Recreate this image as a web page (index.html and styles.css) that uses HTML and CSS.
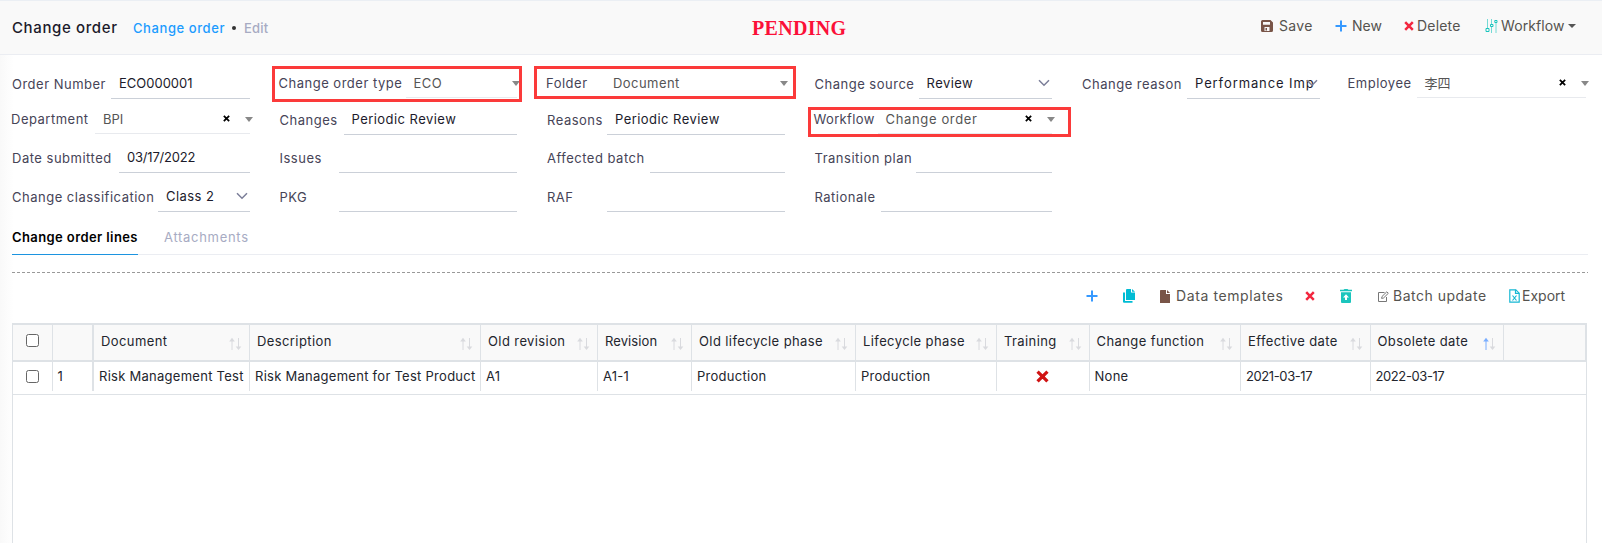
FILE: index.html
```html
<!DOCTYPE html>
<html lang="en">
<head>
<meta charset="utf-8">
<title>Change order</title>
<link rel="stylesheet" href="styles.css">
</head>
<body>
<svg width="0" height="0" class="defs">
  <symbol id="sort" viewBox="0 0 14 14"><path class="up" d="M4 13V3"/><path class="up head" d="M1.2 4.6 4 .8l2.8 3.8z"/><path class="down" d="M10.500 1v10"/><path class="down head" d="M7.700 9.600h5.600L10.500 13z"/></symbol>
  <symbol id="plus" viewBox="0 0 12 12"><path d="M6 .5v11M.5 6h11" stroke="#3699ff" stroke-width="2"/></symbol>
  <symbol id="cross" viewBox="0 0 10 10"><path d="M1.200 1.200l7.600 7.600M8.800 1.200L1.200 8.800" stroke="currentColor" stroke-width="2.500"/></symbol>
  <symbol id="chev" viewBox="0 0 12 8"><path d="M1 1.200l5 5 5-5" fill="none" stroke="#7b7e98" stroke-width="1.500"/></symbol>
</svg>

<header class="top">
  <h1>Change order</h1>
  <a class="crumb">Change order</a><i class="dot"></i><span class="crumb-last">Edit</span>
  <strong class="status">PENDING</strong>
  <nav class="actions">
    <span class="act save"><svg width="12" height="12" viewBox="0 0 12 12"><path fill="#795548" fill-rule="evenodd" d="M1.500 0h8L12 2.500v8A1.500 1.500 0 0 1 10.500 12h-9A1.500 1.500 0 0 1 0 10.500v-9A1.500 1.500 0 0 1 1.500 0zM2 2v2.800h7V2zM3.500 7v4h5V7z"/><path fill="#795548" d="M4.500 8h1.500v2.500H4.500z"/></svg><b>Save</b></span>
    <span class="act new"><svg width="12" height="12"><use href="#plus"/></svg><b>New</b></span>
    <span class="act delete"><svg width="10" height="10"><use href="#cross"/></svg><b>Delete</b></span>
    <span class="act flow"><svg width="13" height="14" viewBox="0 0 13 14" fill="none" stroke="#1bc5bd"><path d="M2.500 0v9M6.500 0v5M6.500 8v6M11 4v10" stroke-opacity=".6"/><path d="M1 9.500h3v3H1zM5.500 5.500h2.500v2H5.500zM9.800 1.500h2.200v2H9.800z"/></svg><b>Workflow</b><i class="caret"></i></span>
  </nav>
</header>

<main>
  <form class="form">
    <div class="row r1">
      <div class="field f-number"><label>Order Number</label><div class="input num">ECO000001</div></div>
      <div class="field soft f-type"><label>Change order type</label><div class="input">ECO<i class="arrow"></i></div><i class="mark"></i></div>
      <div class="field soft bare f-folder"><label>Folder</label><div class="input">Document<i class="arrow"></i></div><i class="mark"></i></div>
      <div class="field f-source"><label>Change source</label><div class="input">Review<svg class="chev" width="12" height="8"><use href="#chev"/></svg></div></div>
      <div class="field f-reason"><label>Change reason</label><div class="input">Performance Imp<svg class="chev" width="12" height="8"><use href="#chev"/></svg></div></div>
      <div class="field soft f-employee"><label>Employee</label><div class="input num">李四<svg class="clear" width="7" height="7"><use href="#cross"/></svg><i class="arrow"></i></div></div>
    </div>
    <div class="row r2">
      <div class="field soft f-dept"><label>Department</label><div class="input num">BPI<svg class="clear" width="7" height="7"><use href="#cross"/></svg><i class="arrow"></i></div></div>
      <div class="field f-changes"><label>Changes</label><div class="input">Periodic Review</div></div>
      <div class="field f-reasons"><label>Reasons</label><div class="input">Periodic Review</div></div>
      <div class="field soft f-workflow"><label>Workflow</label><div class="input">Change order<svg class="clear" width="7" height="7"><use href="#cross"/></svg><i class="arrow"></i></div><i class="mark"></i></div>
    </div>
    <div class="row r3">
      <div class="field f-date"><label>Date submitted</label><div class="input date">03/17/2022</div></div>
      <div class="field f-issues"><label>Issues</label><div class="input"></div></div>
      <div class="field f-batch"><label>Affected batch</label><div class="input"></div></div>
      <div class="field f-plan"><label>Transition plan</label><div class="input"></div></div>
    </div>
    <div class="row r4">
      <div class="field f-class"><label>Change classification</label><div class="input">Class 2<svg class="chev" width="12" height="8"><use href="#chev"/></svg></div></div>
      <div class="field f-issues"><label>PKG</label><div class="input"></div></div>
      <div class="field f-reasons"><label>RAF</label><div class="input"></div></div>
      <div class="field f-rationale"><label>Rationale</label><div class="input"></div></div>
    </div>
  </form>

  <div class="tabs"><span class="tab active">Change order lines</span><span class="tab">Attachments</span></div>
  <div class="dash"></div>

  <div class="tools">
    <span class="act t-add"><svg width="12" height="12"><use href="#plus"/></svg></span>
    <span class="act t-copy"><svg width="12" height="14" viewBox="0 0 12 14" fill="#00bcd4"><path d="M4 0h4v3.500h4V11H3V1q0-1 1-1z"/><path d="M9 0l3 2.700H9z"/><path d="M0 3.500h2V12h7.500v1.800H1q-1 0-1-1z"/></svg></span>
    <span class="act t-data"><svg width="10" height="13" viewBox="0 0 10 13" fill="#795548"><path d="M.7 0H6v4h4v9H0V.7Q0 0 .7 0z"/><path d="M7 0l3 3H7z"/></svg><b>Data templates</b></span>
    <span class="act t-del"><svg width="10" height="10"><use href="#cross"/></svg></span>
    <span class="act t-trash"><svg width="12" height="14" viewBox="0 0 12 14"><path fill="#1bc5bd" fill-rule="evenodd" d="M0 .8h3.500L4.500 0h3l1 .8H12v1.400H0zM1 3.200h10V13q0 1-1 1H2q-1 0-1-1zM6 5.200L3 8.500h2V11h2V8.500h2z"/></svg></span>
    <span class="act t-batch"><svg width="11" height="11" viewBox="0 0 11 11" fill="none" stroke="#777"><path d="M6.500 1.500h-6v9h8V6"/><path d="M4 5.500L8.800.8l1.500 1.500L5.500 7 3.600 7.400z"/></svg><b>Batch update</b></span>
    <span class="act t-export"><svg width="11" height="14" viewBox="0 0 11 14" fill="none" stroke="#17b8d4" stroke-width="1.200"><path d="M.8.8h6l3.400 3.400v9H.8z"/><path d="M6.500.8v3.600h3.700M3.500 6.500l4 5M7.500 6.500l-4 5"/></svg><b>Export</b></span>
  </div>

  <div class="grid">
    <div class="line head">
      <div class="cell check"><i class="box"></i></div><div class="cell"></div>
      <div class="cell"><b>Document</b><svg><use href="#sort"/></svg></div>
      <div class="cell"><b>Description</b><svg><use href="#sort"/></svg></div>
      <div class="cell"><b>Old revision</b><svg><use href="#sort"/></svg></div>
      <div class="cell"><b class="tight">Revision</b><svg><use href="#sort"/></svg></div>
      <div class="cell"><b>Old lifecycle phase</b><svg><use href="#sort"/></svg></div>
      <div class="cell"><b>Lifecycle phase</b><svg><use href="#sort"/></svg></div>
      <div class="cell"><b>Training</b><svg><use href="#sort"/></svg></div>
      <div class="cell"><b>Change function</b><svg><use href="#sort"/></svg></div>
      <div class="cell"><b>Effective date</b><svg><use href="#sort"/></svg></div>
      <div class="cell sorted"><b>Obsolete date</b><svg><use href="#sort"/></svg></div>
      <div class="cell"></div>
    </div>
    <div class="line data">
      <div class="cell check"><i class="box"></i></div><div class="cell">1</div>
      <div class="cell">Risk Management Test</div>
      <div class="cell">Risk Management for Test Product</div>
      <div class="cell">A1</div><div class="cell">A1-1</div>
      <div class="cell">Production</div><div class="cell">Production</div>
      <div class="cell no"><svg width="13" height="13"><use href="#cross"/></svg></div>
      <div class="cell">None</div><div class="cell date">2021-03-17</div><div class="cell date last-date">2022-03-17</div><div class="cell"></div>
    </div>
  </div>
</main>
</body>
</html>
```

FILE: styles.css
```css
* { box-sizing: border-box; }
body {
  margin: 0;
  height: 543px;
  overflow: hidden;
  display: flex;
  flex-direction: column;
  background: linear-gradient(90deg, #f9f9f9, #fff 14px);
  font: 13px/20px Inter, "Noto Sans CJK SC", sans-serif;
  color: #464457;
  white-space: nowrap;
}
b { font-weight: 400; }
svg { flex: none; }
.defs { position: absolute; }

.top {
  height: 55px;
  display: flex;
  align-items: center;
  padding-left: 12px;
  background: #f9f9f9;
  border-top: 1px solid #ebeff4;
  border-bottom: 1px solid #ebedf2;
}
h1 { margin: 0; width: 121px; font-size: 15px; font-weight: 500; letter-spacing: .62px; color: #1c1b2b; }
.crumb { width: 99px; color: #1c9cff; font-weight: 500; letter-spacing: .58px; }
.dot { width: 4px; height: 4px; border-radius: 50%; background: #333; }
.crumb-last { margin-left: 8px; width: 508px; color: #a7abc3; font-weight: 500; letter-spacing: .2px; }
.status { width: 509px; font: bold 20px/24px "Liberation Serif", serif; letter-spacing: .3px; color: #fb1038; }
.actions, .tools { display: flex; }
.actions { padding-bottom: 3px; }
.act { display: flex; align-items: center; flex: none; font-size: 14px; color: #55534f; }
.act.save { width: 74px; gap: 6px; letter-spacing: .3px; }
.act.new { width: 69px; gap: 5px; }
.act.delete { width: 81px; gap: 3px; letter-spacing: .2px; }
.act.delete svg, .t-del svg { color: #f3273f; }
.act.flow { gap: 3px; letter-spacing: .1px; }
.caret { border: 4px solid transparent; border-top-color: #555; border-bottom: 0; }

main { flex: 1; display: flex; flex-direction: column; padding: 11px 14px 0 12px; }
.form { height: 159px; }
.row { display: grid; grid-template-columns: repeat(5, 237.500px) 238.500px; column-gap: 30px; }
.r1 { height: 36px; }
.r2 { height: 38px; }
.r3 { height: 39px; }
.r4 { height: 40px; }
.field { position: relative; height: 33px; display: flex; }
.field label { flex: none; padding-top: 8px; letter-spacing: .5px; }
.input { position: relative; flex: 1; padding: 7px 0 0 8px; border-bottom: 1px solid #cbd0d8; color: #1c1b2b; letter-spacing: .45px; }
.input.num { letter-spacing: 0; }
.date, .input.date { letter-spacing: -.2px; }
.soft label { padding-top: 7px; margin-left: -1px; }
.soft .input { height: 32px; margin-left: 1px; border-color: #e8eaee; color: #555; }
.bare .input { border-color: transparent; }
.chev { position: absolute; right: 2px; top: 13px; }
.arrow { position: absolute; right: -3px; top: 15px; border: 4px solid transparent; border-top: 5px solid #888; border-bottom: 0; }
.clear { position: absolute; right: 20px; top: 13px; color: #000; }
.mark { position: absolute; border: 3px solid #fb3a3a; }
.f-type .mark { left: -8px; top: 0; width: 250px; height: 36px; }
.f-folder .mark { left: -13px; top: 0; width: 262px; height: 33px; }
.f-workflow .mark { left: -7px; top: 5px; width: 263px; height: 30px; }
.f-number label { width: 99px; }
.f-type label { width: 126px; }
.f-folder label { width: 58px; }
.f-source label { width: 104px; }
.f-reason label { width: 105px; }
.f-reason .input { letter-spacing: .9px; }
.f-employee { margin: 0 2px 0 -1px; }
.f-employee label { width: 68px; }
.f-dept label { width: 83px; }
.f-changes label { width: 64px; }
.f-reasons label { width: 60px; }
.f-workflow label { width: 63px; letter-spacing: .35px; }
.f-workflow .input { letter-spacing: .65px; }
.f-date label { width: 107px; }
.f-issues label { width: 59px; }
.f-batch label { width: 103px; }
.f-plan label { width: 101px; }
.f-class label { width: 146px; }
.f-rationale label { width: 66px; }

.tabs { height: 30px; display: flex; gap: 26px; border-bottom: 1px solid #ebedf2; }
.tab { height: 30px; padding-top: 2px; color: #a7abc3; line-height: 21px; letter-spacing: .7px; }
.tab.active { width: 126px; color: #000; font-weight: 600; letter-spacing: .4px; border-bottom: 1px solid #1c94e0; }
.dash { margin-top: 17px; height: 1px; background: repeating-linear-gradient(90deg, #999 0 3px, transparent 3px 5px); }

.tools { height: 50px; align-items: center; padding: 0 0 4px 1074px; }
.t-add { width: 37px; }
.t-copy { width: 37px; }
.t-data { width: 145px; gap: 6px; letter-spacing: .6px; }
.t-del { width: 35px; }
.t-trash { width: 38px; }
.t-batch { width: 131px; gap: 4px; letter-spacing: .5px; }
.t-export { gap: 2px; }

.grid { flex: 1; margin-right: 1px; border: 1px solid #dee2e6; border-width: 2px 1px 0; color: #23252d; letter-spacing: .27px; }
.line { display: grid; grid-template-columns: 39.500px 41.500px 156px 231px 117px 94px 164px 141px 92.500px 151.500px 129.500px 133.500px 1fr; }
.head { height: 37px; background: #f9f9f9; border-bottom: 2px solid #dee2e6; border-right: 1px solid #dee2e6; }
.cell { display: flex; align-items: center; border-right: 1px solid #dee2e6; }
.cell:nth-child(2) { border-right-width: 2px; }
.cell:last-child { border-right: 0; }
.head .cell { padding: 0 7px 0 7px; justify-content: space-between; }
.head b { padding-bottom: 3px; letter-spacing: .4px; }
.head b.tight { letter-spacing: .1px; }
.head svg { width: 14px; height: 14px; margin-top: 3px; stroke: #d9dade; fill: #d9dade; --up: #d9dade; }
.up { stroke: var(--up); fill: var(--up); }
.head .sorted svg { --up: #7aaeff; }
.up.head, .down.head { stroke: none; }
.data { height: 33px; padding-bottom: 3px; border-bottom: 1px solid #dee2e6; }
.data .cell { padding: 0 0 1px 5px; }
.data .cell.check, .head .cell.check { justify-content: center; padding: 0; }
.data .cell.no { justify-content: center; color: #d01414; padding: 0; }
.data .date { letter-spacing: -.4px; }
.data .last-date { border-right: 0; }
.box { width: 13px; height: 13px; border: 1px solid #666; border-radius: 2.500px; background: #fff; }
.head .box { margin-top: -5px; }
```
